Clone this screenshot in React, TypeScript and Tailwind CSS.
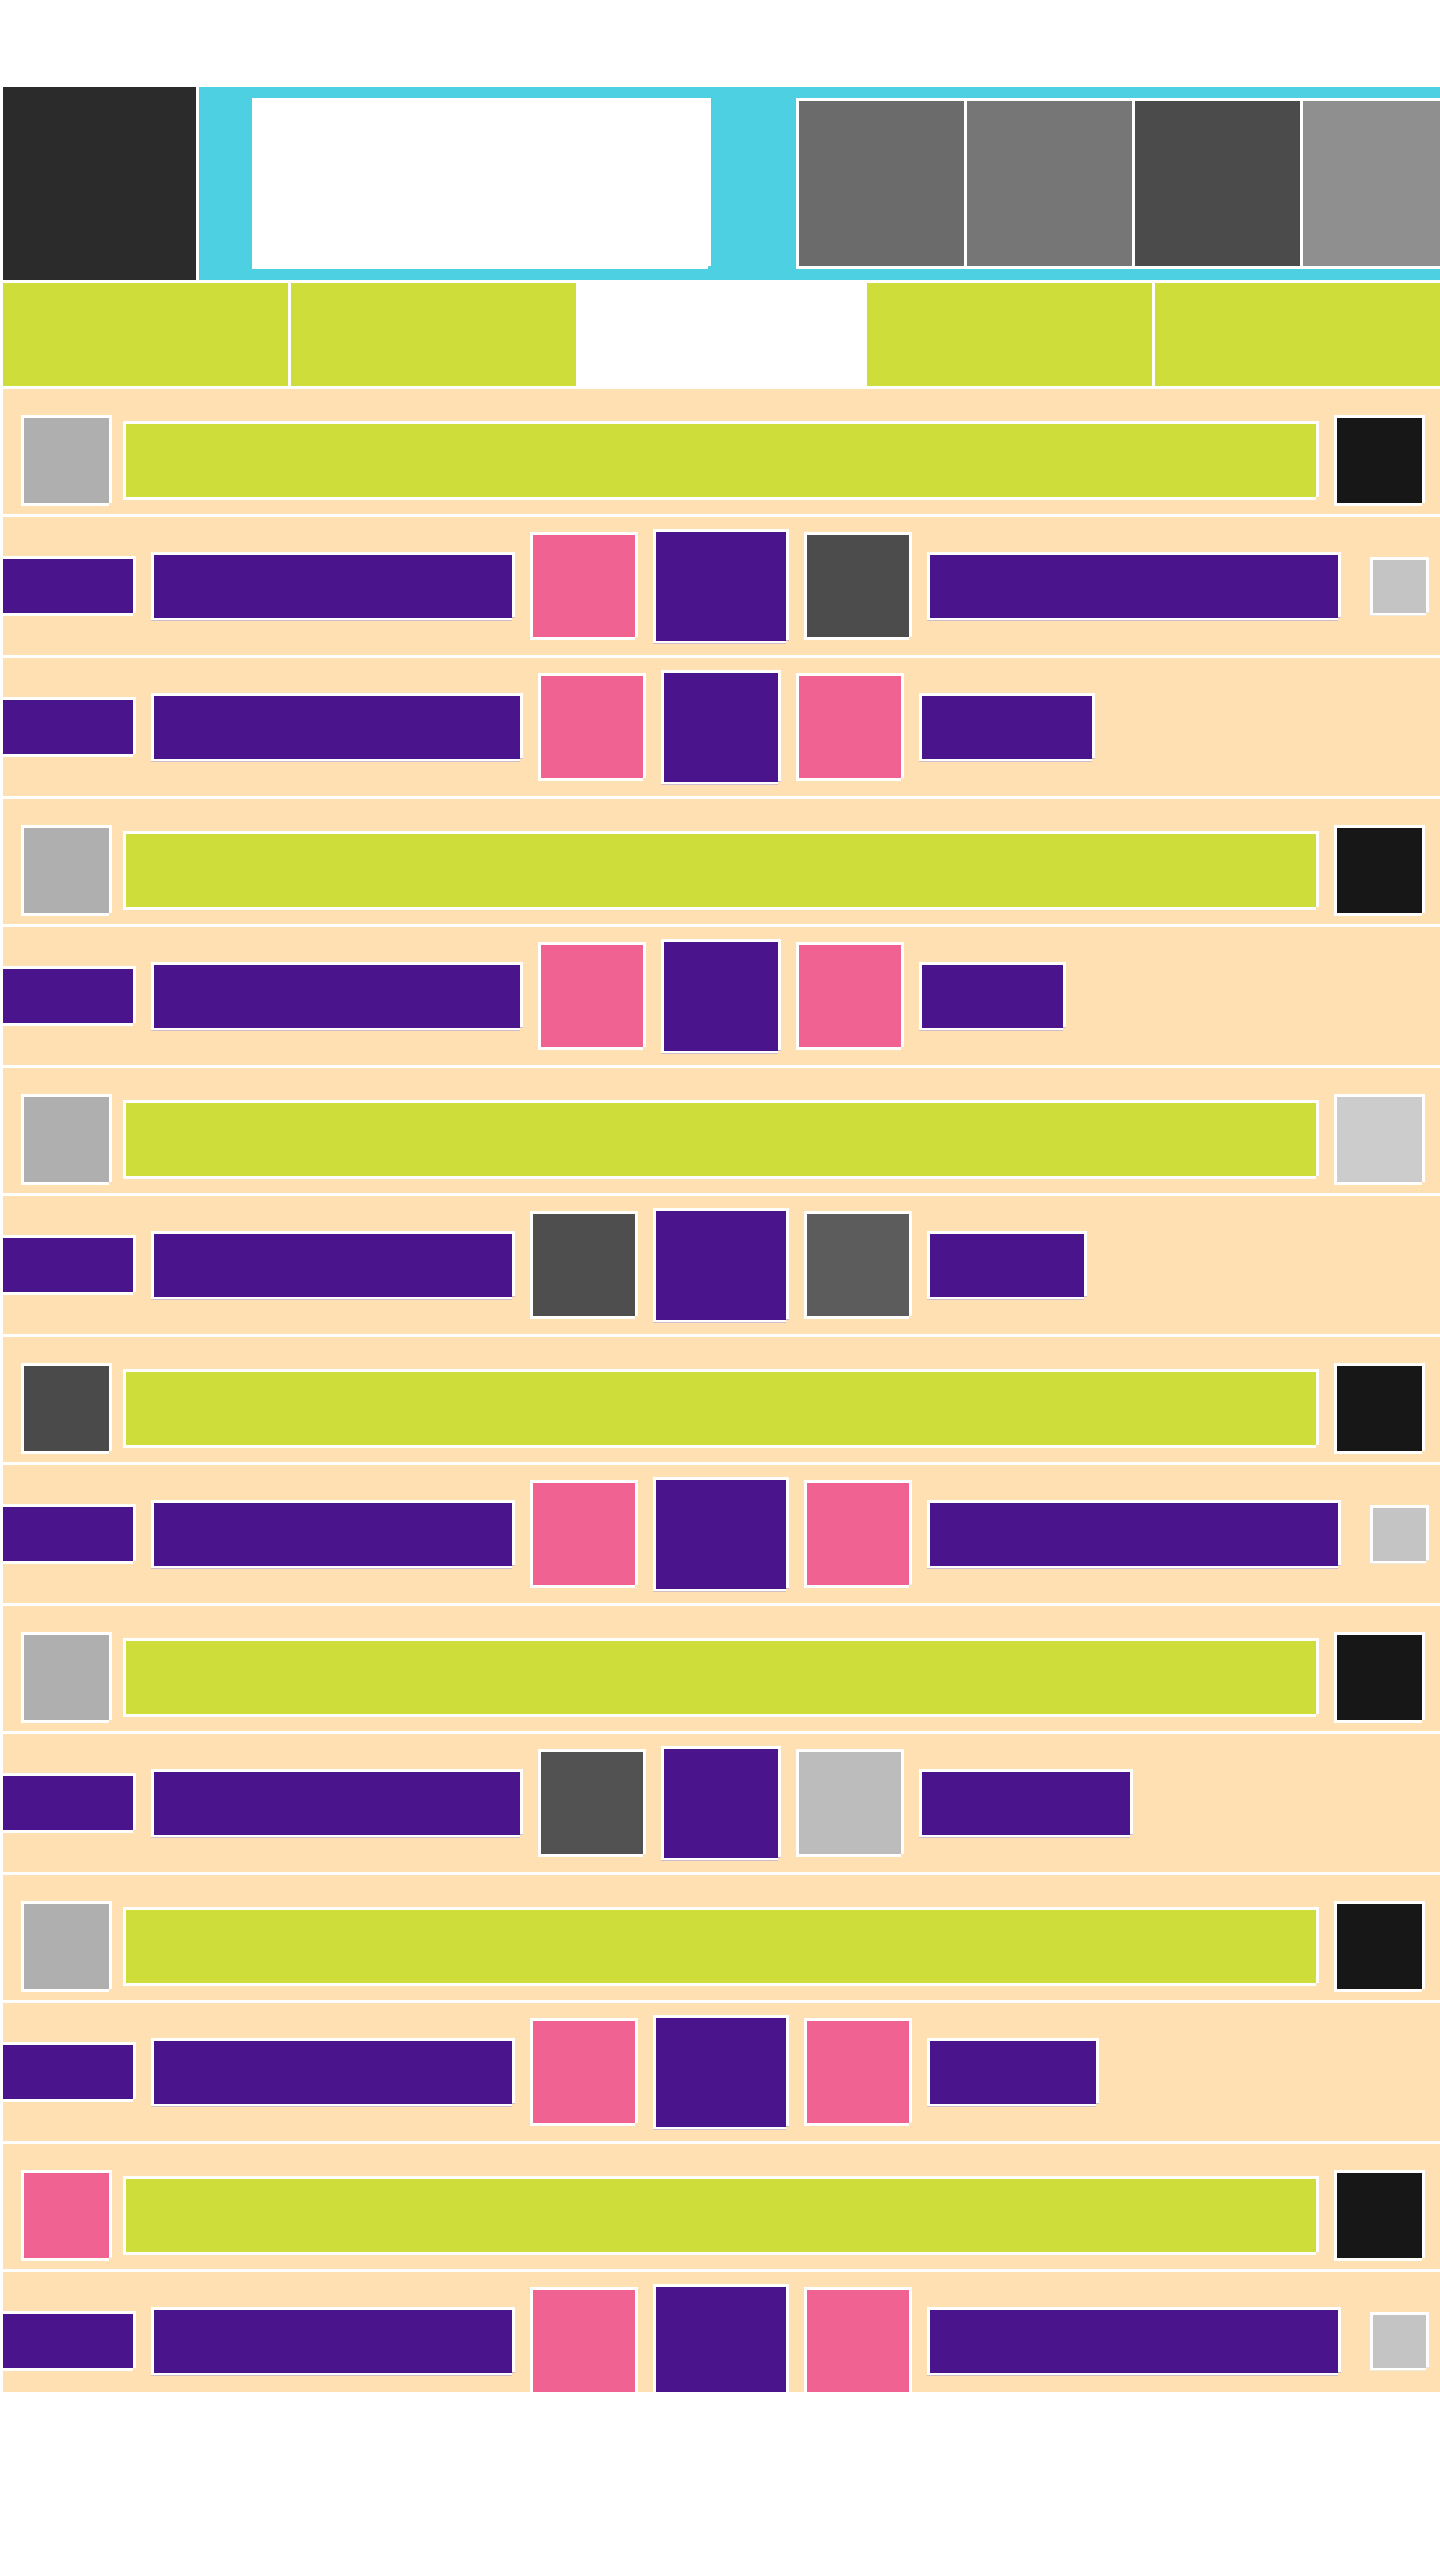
import React from "react"

// white 3px frame with the bottom-right corner knocked out, like the mock boxes
const notch =
  "border-[3px] border-white [clip-path:polygon(0_0,100%_0,100%_calc(100%_-_3px),calc(100%_-_3px)_calc(100%_-_3px),calc(100%_-_3px)_100%,0_100%)]"

type HeaderRow = { kind: "h"; left: string; right: string }
type DetailRow = {
  kind: "d"
  variant: "a" | "b"
  mid: [string, string]
  tail: number | "long"
}
type Row = HeaderRow | DetailRow

const rows: Row[] = [
  { kind: "h", left: "bg-[#afafaf]", right: "bg-[#171717]" },
  { kind: "d", variant: "a", mid: ["bg-[#f06292]", "bg-[#4c4c4c]"], tail: "long" },
  { kind: "d", variant: "b", mid: ["bg-[#f06292]", "bg-[#f06292]"], tail: 176 },
  { kind: "h", left: "bg-[#afafaf]", right: "bg-[#171717]" },
  { kind: "d", variant: "b", mid: ["bg-[#f06292]", "bg-[#f06292]"], tail: 147 },
  { kind: "h", left: "bg-[#afafaf]", right: "bg-[#cccccc]" },
  { kind: "d", variant: "a", mid: ["bg-[#4e4e4e]", "bg-[#5c5c5c]"], tail: 160 },
  { kind: "h", left: "bg-[#4a4a4a]", right: "bg-[#171717]" },
  { kind: "d", variant: "a", mid: ["bg-[#f06292]", "bg-[#f06292]"], tail: "long" },
  { kind: "h", left: "bg-[#afafaf]", right: "bg-[#171717]" },
  { kind: "d", variant: "b", mid: ["bg-[#525252]", "bg-[#bcbcbc]"], tail: 214 },
  { kind: "h", left: "bg-[#afafaf]", right: "bg-[#171717]" },
  { kind: "d", variant: "a", mid: ["bg-[#f06292]", "bg-[#f06292]"], tail: 172 },
  { kind: "h", left: "bg-[#f06292]", right: "bg-[#171717]" },
  { kind: "d", variant: "a", mid: ["bg-[#f06292]", "bg-[#f06292]"], tail: "long" },
]

function Header() {
  return (
    <div className="flex h-[193px] shrink-0 gap-[3px]">
      <div className="w-[193px] shrink-0 bg-[#2b2b2b]" />
      <div className="flex min-w-0 flex-1 gap-[85px] overflow-hidden bg-[#4dd0e1] py-[11px] pl-[53px]">
        <div className={`w-[459px] shrink-0 bg-white ${notch}`} />
        <div className="flex shrink-0 gap-[3px] bg-white p-[3px]">
          <div className="w-[165px] bg-[#6b6b6b]" />
          <div className="w-[165px] bg-[#767676]" />
          <div className="w-[165px] bg-[#4b4b4b]" />
          <div className="w-[165px] bg-[#8f8f8f]" />
        </div>
      </div>
    </div>
  )
}

function Nav() {
  return (
    <div className="grid h-[103px] shrink-0 grid-cols-5 gap-[3px]">
      <div className="bg-[#cfdd3a]" />
      <div className="bg-[#cfdd3a]" />
      <div className="bg-white" />
      <div className="bg-[#cfdd3a]" />
      <div className="bg-[#cfdd3a]" />
    </div>
  )
}

function GroupRow({ row }: { row: HeaderRow }) {
  return (
    <div className="flex h-[125px] shrink-0 items-center bg-[#ffe0b2] pb-[8px] pl-[18px] pr-[15px] pt-[26px]">
      <div className={`h-[91px] w-[91px] shrink-0 ${row.left} ${notch}`} />
      <div className={`ml-[11px] h-[79px] flex-1 bg-[#cfdd3a] ${notch}`} />
      <div className={`ml-[15px] h-[91px] w-[91px] shrink-0 ${row.right} ${notch}`} />
    </div>
  )
}

function ItemRow({ row }: { row: DetailRow }) {
  const wide = row.variant === "b"
  return (
    <div className="flex h-[138px] shrink-0 items-center gap-[15px] bg-[#ffe0b2]">
      <div className={`-ml-[3px] h-[60px] w-[136px] shrink-0 bg-[#4a148c] ${notch}`} />
      <div className={`h-[69px] shrink-0 bg-[#4a148c] ${wide ? "w-[372px]" : "w-[364px]"} ${notch}`} />
      <div className={`h-[108px] w-[108px] shrink-0 ${row.mid[0]} ${notch}`} />
      <div className={`h-[115px] shrink-0 bg-[#4a148c] ${wide ? "w-[120px]" : "w-[136px]"} ${notch}`} />
      <div className={`h-[108px] w-[108px] shrink-0 ${row.mid[1]} ${notch}`} />
      {row.tail === "long" ? (
        <>
          <div className={`h-[69px] w-[414px] shrink-0 bg-[#4a148c] ${notch}`} />
          <div className={`ml-[14px] h-[59px] w-[59px] shrink-0 bg-[#c4c4c4] ${notch}`} />
        </>
      ) : (
        <div className={`h-[69px] shrink-0 bg-[#4a148c] ${notch}`} style={{ width: row.tail }} />
      )}
    </div>
  )
}

export default function App() {
  return (
    <div className="min-h-[2560px] bg-white pt-[87px]">
      <div className="flex h-[2305px] flex-col gap-[3px] overflow-hidden pl-[3px]">
        <Header />
        <Nav />
        {rows.map((row, i) =>
          row.kind === "h" ? <GroupRow key={i} row={row} /> : <ItemRow key={i} row={row} />
        )}
      </div>
    </div>
  )
}
